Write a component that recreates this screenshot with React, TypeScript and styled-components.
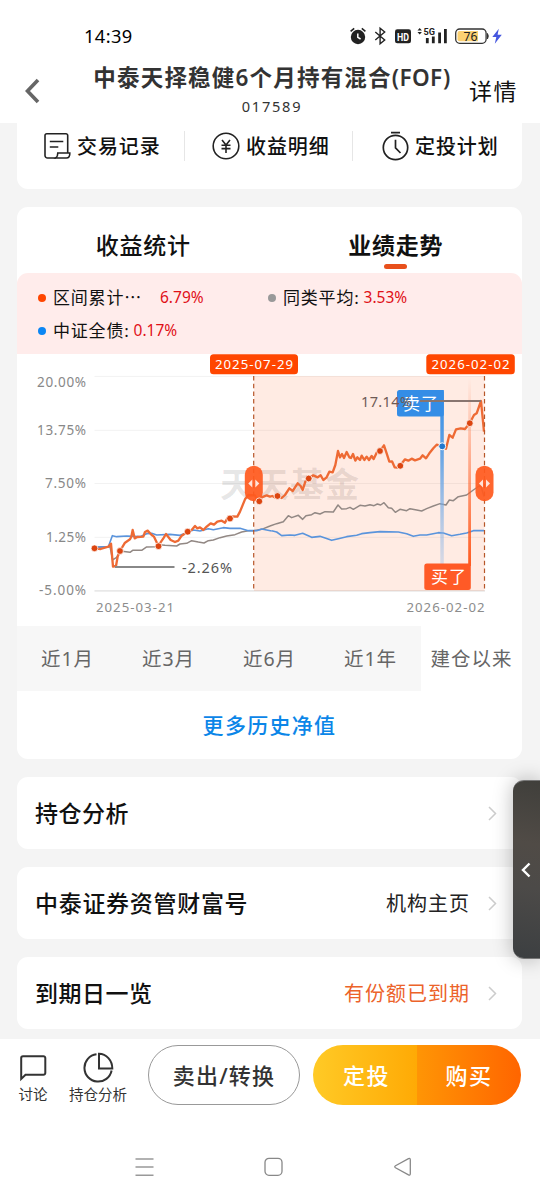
import React from "react";
import styled, { createGlobalStyle } from "styled-components";

const GlobalStyle = createGlobalStyle`
  * { box-sizing: border-box; }
  body {
    margin: 0;
    background: #f4f4f4;
    font-family: "Noto Sans", "Noto Sans CJK SC", sans-serif;
    color: #111;
  }
`;

const Screen = styled.div`
  position: relative;
  width: 540px;
  height: 1200px;
  display: flex;
  flex-direction: column;
  overflow: hidden;
  background: #f4f4f4;
`;

const Label = styled.span<{ $size: number; $gap?: number; $weight?: number; $color?: string }>`
  font-size: ${(p) => p.$size}px;
  letter-spacing: ${(p) => p.$gap ?? 0}px;
  font-weight: ${(p) => p.$weight ?? 400};
  color: ${(p) => p.$color ?? "#111"};
  line-height: 1;
  white-space: nowrap;
`;

const StatusBar = styled.div`
  height: 60px;
  padding: 12px 36px 0 84px;
  display: flex;
  align-items: center;
  justify-content: space-between;
  background: #fff;
`;

const Header = styled.header`
  height: 63px;
  padding: 0 21px 0 24px;
  display: flex;
  background: #fff;
`;

const BackButton = styled.button`
  width: 18px;
  height: 28px;
  margin-top: 17px;
  padding: 0;
  border: 0;
  background: none;
`;

const TitleBlock = styled.div`
  width: 360px;
  margin: 6px 0 0 50px;
  display: flex;
  flex-direction: column;
  align-items: center;
  gap: 9px;
`;

const TitleLine = styled.div`
  display: flex;
  align-items: center;
  height: 24px;
`;

const DetailLink = styled.div`
  margin: 20px 0 0 17px;
`;

const Content = styled.main`
  flex: 1;
  padding: 0 18px 0 17px;
  display: flex;
  flex-direction: column;
  gap: 18px;
`;

const Card = styled.section`
  background: #fff;
  border-radius: 11px;
  overflow: hidden;
`;

const ActionCard = styled(Card)`
  height: 66px;
  padding-top: 8px;
  border-radius: 0 0 11px 11px;
  display: grid;
  grid-template-columns: 167px 168px 170px;
`;

const Action = styled.div<{ $inset: number }>`
  height: 30px;
  display: flex;
  align-items: center;
  gap: 6px;
  padding-left: ${(p) => p.$inset}px;
  & + & { border-left: 1px solid #e6e6e6; }
  > span { padding-top: 2px; }
`;

const Tabs = styled.div`
  height: 66px;
  display: grid;
  grid-template-columns: 1fr 1fr;
`;

const Tab = styled.div`
  display: flex;
  flex-direction: column;
  align-items: center;
  padding-top: 27px;
  gap: 7px;
`;

const TabMarker = styled.i`
  width: 23px;
  height: 5px;
  border-radius: 3px;
  background: #e8501c;
`;

const Legend = styled.div`
  height: 81px;
  padding: 8px 20px 0 21px;
  display: grid;
  grid-template-columns: 230px 1fr;
  grid-template-rows: 33px 33px;
  background: #ffeceb;
  border-radius: 11px 11px 0 0;
`;

const LegendItem = styled.div`
  display: flex;
  align-items: center;
`;

const Dot = styled.i<{ $color: string }>`
  width: 8px;
  height: 8px;
  margin-right: 7px;
  border-radius: 50%;
  background: ${(p) => p.$color};
`;

const LegendValue = styled(Label)<{ $offset: number }>`
  margin-left: ${(p) => p.$offset}px;
`;

const ChartSvg = styled.svg`
  display: block;
  width: 505px;
  height: 272px;
`;

const Periods = styled.div`
  height: 65px;
  display: grid;
  grid-template-columns: repeat(5, 101px);
`;

const Period = styled.div<{ $active?: boolean }>`
  display: flex;
  align-items: center;
  justify-content: center;
  background: ${(p) => (p.$active ? "#fff" : "#f7f7f7")};
`;

const MoreLink = styled.div`
  height: 68px;
  display: flex;
  align-items: center;
  justify-content: center;
`;

const RowCard = styled(Card)`
  height: 72px;
  padding: 0 25px 0 18px;
  display: flex;
  align-items: center;
`;

const RowValue = styled.div`
  margin-left: auto;
  display: flex;
  align-items: center;
  gap: 18px;
  > span { padding-top: 2px; }
`;

const BottomBar = styled.footer`
  height: 161px;
  padding-top: 6px;
  background: #fff;
`;

const BottomActions = styled.div`
  height: 60px;
  padding-left: 18px;
  display: flex;
`;

const ToolButton = styled.div<{ $width: number; $left: number }>`
  width: ${(p) => p.$width}px;
  margin-left: ${(p) => p.$left}px;
  padding-top: 7px;
  display: flex;
  flex-direction: column;
  align-items: center;
  gap: 4px;
`;

const SellButton = styled.div`
  width: 152px;
  height: 60px;
  margin-left: 20px;
  display: flex;
  align-items: center;
  justify-content: center;
  border: 1px solid #999;
  border-radius: 30px;
`;

const BuyGroup = styled.div`
  width: 208px;
  height: 60px;
  margin-left: 13px;
  display: grid;
  grid-template-columns: 1fr 1fr;
  border-radius: 30px;
  overflow: hidden;
`;

const BuyButton = styled.div<{ $from: string; $to: string; $shift: number }>`
  display: flex;
  align-items: center;
  justify-content: center;
  padding-left: ${(p) => p.$shift}px;
  background: linear-gradient(90deg, ${(p) => p.$from}, ${(p) => p.$to});
`;

const SystemNav = styled.nav`
  height: 20px;
  margin-top: 52px;
  padding: 0 128px 0 135px;
  display: flex;
  justify-content: space-between;
`;

const SideHandle = styled.aside`
  position: absolute;
  top: 780px;
  right: 0;
  width: 27px;
  height: 179px;
  padding-right: 2px;
  display: flex;
  align-items: center;
  justify-content: center;
  border: 1px solid #777;
  border-right: 0;
  border-left: 0;
  border-radius: 11px 0 0 11px;
  background: linear-gradient(190deg, #403f3b 0%, #504b46 35%, #4c4a48 60%, #3c3f41 100%);
  box-shadow: 0 0 20px rgba(0, 0, 0, 0.28);
`;

const StatusIcons = () => (
  <svg width="156" height="24" viewBox="348 24 156 24" fill="none">
    <g>
      <circle cx="358" cy="37" r="7.2" fill="#222" />
      <path d="M350.6 31.4l3.6-3M365.4 31.4l-3.6-3" stroke="#222" strokeWidth="1.6" />
      <path d="M357.8 33.4v4l2.8 1.6" stroke="#fff" strokeWidth="1.5" />
    </g>
    <path d="M375.3 32l9.4 8-4.6 3.8V28.2l4.6 3.8-9.4 8" stroke="#222" strokeWidth="1.4" />
    <rect x="395" y="29.3" width="16" height="14" rx="2.3" fill="#222" />
    <text x="397" y="40.5" fontFamily="Roboto" fontSize="11.5" fontWeight="700" fill="#fff" textLength="12" lengthAdjust="spacingAndGlyphs">HD</text>
    <path d="M417.5 30.6l2.2-2.6 2.2 2.6zM417.5 32l2.2 2.6 2.2-2.6z" fill="#222" />
    <text x="423.5" y="35" fontFamily="Roboto" fontSize="9.5" fontWeight="700" fill="#222" textLength="11.5" lengthAdjust="spacingAndGlyphs">5G</text>
    <path d="M427.3 38v5.3M433.3 36.5v6.8M439.6 32.5v10.8M445.4 29v14.3" stroke="#222" strokeWidth="2.8" />
    <rect x="455.7" y="29" width="30.4" height="14.3" rx="4" stroke="#333" strokeWidth="1.3" />
    <path d="M459.5 31h18.5v10.3h-18.5a2 2 0 0 1-2-2V33a2 2 0 0 1 2-2z" fill="#fcd173" />
    <path d="M487.5 33.5q1.6 2.7 0 5.4z" fill="#333" stroke="#333" />
    <text x="463.6" y="40.6" fontFamily="Noto Sans" fontSize="12" fill="#222" textLength="14" lengthAdjust="spacingAndGlyphs">76</text>
    <path d="M498.8 28.8l-6.5 8.3h4l-1.5 6.6 7-9h-4.2z" fill="#4657df" />
  </svg>
);

const RecordIcon = () => (
  <svg width="28" height="28" viewBox="0 0 28 28" fill="none" stroke="#222" strokeWidth="1.6">
    <path d="M13 26H4.5A2.5 2.5 0 0 1 2 23.500V3.500A1.700 1.700 0 0 1 3.700 1.800H23a1.700 1.700 0 0 1 1.700 1.700V21" />
    <path d="M6.800 9.500h13.500M6.800 15h8.500" />
    <path d="M12.800 26q2-1.500 2-5h12q.3 5-3.500 5z" />
  </svg>
);

const YuanIcon = () => (
  <svg width="28" height="28" viewBox="0 0 28 28" fill="none" stroke="#222" strokeWidth="1.6">
    <circle cx="14" cy="14" r="12.800" />
    <path d="M10 8l4 5 4-5M14 13v8M9.500 13.300h9M9.500 16.600h9" />
  </svg>
);

const ClockIcon = () => (
  <svg width="27" height="30" viewBox="0 0 27 30" fill="none" stroke="#222" strokeWidth="1.700">
    <circle cx="13.500" cy="16.500" r="12.200" />
    <path d="M9 1.700h9M13.500 8.800v8l5 5.200" />
  </svg>
);

const RowArrow = () => (
  <svg width="9" height="15" viewBox="0 0 9 15" fill="none" stroke="#ccc" strokeWidth="1.500">
    <path d="M1 1l6.500 6.500L1 14" />
  </svg>
);

const AXIS = [
  { y: 376.4, textY: 387, value: "20.00%", x: 37 },
  { y: 430.3, textY: 434.5, value: "13.75%", x: 37 },
  { y: 483.5, textY: 488, value: "7.50%", x: 45 },
  { y: 537.3, textY: 541.5, value: "1.25%", x: 46 },
];

const fundEarly =
  "43,535 62,537 85,530 93,521 99,590 108,588 113,560 120,543 135,518 150,508 154,500 158,480 164,505 172,501 190,500 195,486 203,482 215,495 222,500 235,527 250,505 258,492 272,510 285,516 295,512 305,497 323,485 335,480 345,468 352,475 360,472 370,480 380,470 392,460 402,464 412,455 425,452 435,458 442,445 450,445 458,439 472,440 480,425 495,388 505,375 525,376 530,388 538,392 545,382 560,376 570,380 577,378 585,382 593,378";
const fundLate =
  "22,378 35,384 45,375 58,355 68,363 83,340 92,348 98,360 106,335 116,325 130,316 143,322 152,316 160,330 170,322 178,305 188,307 196,285 204,243 210,262 216,252 222,264 230,246 238,262 243,264 249,252 256,272 262,262 270,270 275,257 283,270 290,260 297,270 305,258 311,267 320,248 330,243 342,226 350,250 358,275 366,274 374,292 382,293 390,287 405,268 415,272 425,266 435,271 450,266 458,256 468,265 478,250 490,235 500,224 517,229 528,236 538,195 548,203 558,178 572,175 585,177 599,160 612,135 620,130 633,93 642,185";
const peerEarly =
  "43,532 90,530 98,570 110,562 120,543 150,547 158,541 185,541 200,531 225,530 235,524 255,526 290,528 300,522 320,520 335,512 355,516 372,519 385,512 400,510 420,503 440,498 465,494 485,486 505,482 522,482 545,478 570,468";
const peerLate =
  "0,468 20,461 40,455 55,437 65,443 85,436 98,448 108,437 125,434 135,428 150,432 165,425 190,426 204,405 215,417 230,416 240,412 250,418 270,406 285,408 300,404 312,407 322,402 332,405 342,398 355,413 365,415 376,427 390,418 410,422 420,416 440,420 455,423 470,416 490,408 510,401 528,405 538,390 550,392 565,380 590,375 610,360 632,345 642,380";
const bondEarly =
  "43,532 85,530 97,497 110,500 140,498 180,500 200,491 215,490 230,495 270,493 300,496 320,488 340,480 360,483 385,476 400,479 430,473 450,475 480,475 505,482 530,482 545,477 575,483";
const bondLate =
  "5,482 20,486 35,497 60,495 75,496 98,490 125,502 150,499 185,511 205,506 230,500 260,496 275,491 300,488 330,485 385,486 410,491 430,499 450,495 470,495 505,488 520,489 545,497 570,493 590,489 610,482 642,482";

const TRADES = [
  [94.5, 548.3], [120, 551], [158.5, 546.2], [187.7, 531.7], [230, 518.5],
  [259.3, 501.3], [277.5, 496], [308.7, 478.5], [380, 451], [400.3, 465.8], [469.8, 423.2],
];

const Handle = ({ x }: { x: number }) => (
  <g>
    <rect x={x - 9} y="465.700" width="18" height="35.500" rx="9" fill="#ff5a1f" fillOpacity=".93" />
    <path d={`M${x - 1.5} 479.500v8l-4-4zM${x + 1.5} 479.500v8l4-4z`} fill="#ffe3d8" />
  </g>
);

const PerformanceChart = () => (
  <ChartSvg viewBox="17 354 505 272" fontFamily='"Noto Sans", "Noto Sans CJK SC", sans-serif'>
    <defs>
      <linearGradient id="sellLine" x1="0" y1="0" x2="0" y2="1">
        <stop offset="0" stopColor="#348de6" />
        <stop offset=".3" stopColor="#5a9fe5" />
        <stop offset="1" stopColor="#8fb6e6" stopOpacity=".3" />
      </linearGradient>
      <linearGradient id="buyLine" x1="0" y1="0" x2="0" y2="1">
        <stop offset="0" stopColor="#ff5a1f" stopOpacity="0" />
        <stop offset="1" stopColor="#ff5a1f" />
      </linearGradient>
    </defs>
    {AXIS.map((a) => (
      <g key={a.value}>
        <line x1="94.500" x2="485" y1={a.y} y2={a.y} stroke="#f2f2f2" />
        <text x={a.x} y={a.textY} fontSize="13.500" fill="#888" textLength={86 - a.x}>{a.value}</text>
      </g>
    ))}
    <line x1="94.500" x2="485" y1="590.800" y2="590.800" stroke="#e8e8e8" strokeWidth="1.700" />
    <text x="39" y="595" fontSize="13.500" fill="#888" textLength="47">-5.00%</text>
    <text x="220" y="497" fontSize="34" fontWeight="700" fill="#000" fillOpacity=".1" textLength="139">天天基金</text>
    <rect x="254" y="376" width="230.500" height="215" fill="#ff4600" fillOpacity=".11" />

    <g fill="none" strokeLinejoin="round">
      <g stroke="#928884" strokeWidth="4.500">
        <polyline transform="translate(80 370) scale(.33333)" points={peerEarly} />
        <polyline transform="translate(270 370) scale(.33333)" points={peerLate} />
      </g>
      <g stroke="#5a94dc" strokeWidth="4.800">
        <polyline transform="translate(80 370) scale(.33333)" points={bondEarly} />
        <polyline transform="translate(270 370) scale(.33333)" points={bondLate} />
      </g>
    </g>

    <rect x="440.300" y="390" width="3.500" height="180" fill="url(#sellLine)" />
    <rect x="397" y="390" width="46.800" height="26.500" rx="2.500" fill="#348de6" />
    <text x="403" y="409.500" fontSize="17" fill="#fff" textLength="35">卖了</text>
    <rect x="468.200" y="378" width="2.800" height="188" fill="url(#buyLine)" />
    <rect x="424.300" y="563.500" width="46.500" height="26.500" rx="2.500" fill="#ff5a26" />
    <text x="431" y="583" fontSize="17" fill="#fff" textLength="35">买了</text>

    <g fill="none" stroke="#ee6a34" strokeWidth="7" strokeLinejoin="round">
      <polyline transform="translate(80 370) scale(.33333)" points={fundEarly} />
      <polyline transform="translate(270 370) scale(.33333)" points={fundLate} />
    </g>
    <g stroke="#b75628" strokeWidth="1.200" strokeDasharray="4.500 3.200">
      <line x1="253.700" x2="253.700" y1="376" y2="591" />
      <line x1="484.500" x2="484.500" y1="376" y2="591" />
    </g>

    <Handle x={253.8} />
    <Handle x={484.5} />
    {TRADES.map(([x, y]) => (
      <circle key={x} cx={x} cy={y} r="3.400" fill="#dc4510" stroke="#fff" strokeOpacity=".75" strokeWidth="1" />
    ))}
    <circle cx="442.200" cy="446.300" r="3.500" fill="#2478ce" stroke="#fff" />

    <line x1="115" x2="174.500" y1="567" y2="567" stroke="#888" strokeWidth="1.800" />
    <text x="182" y="573" fontSize="14.500" fill="#555" textLength="50">-2.26%</text>
    <line x1="420" x2="481" y1="401" y2="401" stroke="#887570" strokeWidth="1.800" />
    <text x="361" y="406.500" fontSize="14.500" fill="#6e5a55" textLength="51">17.14%</text>

    <g fontSize="13.200" fill="#fff">
      <rect x="210" y="354.200" width="88" height="20" rx="3.500" fill="#ff4600" />
      <text x="215" y="369.400" textLength="78">2025-07-29</text>
      <rect x="426.300" y="354.200" width="88.500" height="20" rx="3.500" fill="#ff4600" />
      <text x="431.500" y="369.400" textLength="78">2026-02-02</text>
    </g>
    <g fontSize="13.200" fill="#8c8c8c">
      <text x="96" y="612" textLength="78">2025-03-21</text>
      <text x="406.500" y="612" textLength="78">2026-02-02</text>
    </g>
  </ChartSvg>
);

const PERIODS = ["近1月", "近3月", "近6月", "近1年", "建仓以来"];

export default function App() {
  return (
    <Screen>
      <GlobalStyle />
      <StatusBar>
        <Label $size={18.3} $gap={0.4} $color="#000">14:39</Label>
        <StatusIcons />
      </StatusBar>
      <Header>
        <BackButton aria-label="返回">
          <svg width="18" height="28" viewBox="0 0 18 28" fill="none" stroke="#666" strokeWidth="3.600">
            <path d="M14 3L3.500 14 14 25" />
          </svg>
        </BackButton>
        <TitleBlock>
          <TitleLine>
            <Label $size={22.5} $gap={1.2} $weight={600} $color="#333">中泰天择稳健</Label>
            <Label $size={22.5} $gap={1.2} $weight={600} $color="#333">6</Label>
            <Label $size={22.5} $gap={1.2} $weight={600} $color="#333">个月持有混合</Label>
            <Label $size={22.5} $gap={0.4} $weight={600} $color="#333">(FOF)</Label>
          </TitleLine>
          <Label $size={14.6} $gap={1.75} $color="#333">017589</Label>
        </TitleBlock>
        <DetailLink><Label $size={23} $gap={1.5} $color="#111">详情</Label></DetailLink>
      </Header>

      <Content>
        <ActionCard>
          <Action $inset={26}><RecordIcon /><Label $size={20} $gap={0.9} $weight={500}>交易记录</Label></Action>
          <Action $inset={27}><YuanIcon /><Label $size={20} $gap={0.9} $weight={500}>收益明细</Label></Action>
          <Action $inset={29}><ClockIcon /><Label $size={20} $gap={0.9} $weight={500}>定投计划</Label></Action>
        </ActionCard>

        <Card>
          <Tabs>
            <Tab><Label $size={23} $gap={0.7} $weight={500}>收益统计</Label></Tab>
            <Tab><Label $size={23} $gap={0.7} $weight={700}>业绩走势</Label><TabMarker /></Tab>
          </Tabs>
          <Legend>
            <LegendItem>
              <Dot $color="#ff4600" />
              <Label $size={17} $gap={0.8}>区间累计⋯</Label>
              <LegendValue $size={15.5} $color="#df1118" $offset={18}>6.79%</LegendValue>
            </LegendItem>
            <LegendItem>
              <Dot $color="#999" />
              <Label $size={17} $gap={0.8}>同类平均:</Label>
              <LegendValue $size={15.5} $color="#df1118" $offset={4}>3.53%</LegendValue>
            </LegendItem>
            <LegendItem>
              <Dot $color="#0b86f4" />
              <Label $size={17} $gap={0.8}>中证全债:</Label>
              <LegendValue $size={15.5} $color="#df1118" $offset={4}>0.17%</LegendValue>
            </LegendItem>
          </Legend>
          <PerformanceChart />
          <Periods>
            {PERIODS.map((name, i) => (
              <Period key={name} $active={i === 4}>
                <Label $size={19.5} $gap={1} $color="#666">{name}</Label>
              </Period>
            ))}
          </Periods>
          <MoreLink><Label $size={21} $gap={1.3} $weight={500} $color="#0b86e8">更多历史净值</Label></MoreLink>
        </Card>

        <RowCard>
          <Label $size={23} $gap={0.5} $weight={500}>持仓分析</Label>
          <RowValue><RowArrow /></RowValue>
        </RowCard>
        <RowCard>
          <Label $size={23} $gap={0.7} $weight={500}>中泰证券资管财富号</Label>
          <RowValue><Label $size={20} $gap={1} $color="#222">机构主页</Label><RowArrow /></RowValue>
        </RowCard>
        <RowCard>
          <Label $size={23} $gap={0.5} $weight={500}>到期日一览</Label>
          <RowValue><Label $size={20} $gap={1} $color="#ec632a">有份额已到期</Label><RowArrow /></RowValue>
        </RowCard>
      </Content>

      <BottomBar>
        <BottomActions>
          <ToolButton $width={30} $left={0}>
            <svg width="28" height="31" viewBox="0 0 28 31" fill="none" stroke="#333" strokeWidth="2">
              <path d="M2.200 27V6a1.800 1.800 0 0 1 1.800-1.800h20.500A1.800 1.800 0 0 1 26.300 6v15a1.800 1.800 0 0 1-1.800 1.800H6.500z" />
            </svg>
            <Label $size={14.5} $color="#333">讨论</Label>
          </ToolButton>
          <ToolButton $width={60} $left={20}>
            <svg width="32" height="31" viewBox="0 0 32 31" fill="none" stroke="#333" strokeWidth="2">
              <path d="M14.500 2.300A13.700 13.700 0 1 0 29.600 18.500" />
              <path d="M17 1.800V16.500H30.300A13.500 14.700 0 0 0 17 1.800z" />
            </svg>
            <Label $size={14.5} $color="#333">持仓分析</Label>
          </ToolButton>
          <SellButton><Label $size={22} $gap={1.2} $weight={500} $color="#333">卖出/转换</Label></SellButton>
          <BuyGroup>
            <BuyButton $from="#ffca26" $to="#ffaa05" $shift={3}><Label $size={22} $gap={1.5} $weight={500} $color="#fff">定投</Label></BuyButton>
            <BuyButton $from="#ff9505" $to="#ff6500" $shift={0}><Label $size={22} $gap={1.5} $weight={500} $color="#fff">购买</Label></BuyButton>
          </BuyGroup>
        </BottomActions>
        <SystemNav>
          <svg width="20" height="20" viewBox="0 0 20 20" stroke="#999" strokeWidth="1.500"><path d="M.5 2h18M.5 10h18M.5 18.200h18" /></svg>
          <svg width="20" height="20" viewBox="0 0 20 20" fill="none" stroke="#888" strokeWidth="1.300"><rect x="1" y="1.300" width="17" height="17" rx="4" /></svg>
          <svg width="20" height="20" viewBox="0 0 20 20" fill="none" stroke="#888" strokeWidth="1.300"><path d="M3.500 8.800L16.500 1.600q1.800-.8 1.800 1.100v14.100q0 1.900-1.800 1.100L3.500 10.700q-1.500-1 0-1.900z" /></svg>
        </SystemNav>
      </BottomBar>

      <SideHandle>
        <svg width="10" height="16" viewBox="0 0 10 16" fill="none" stroke="#fff" strokeWidth="2.400"><path d="M8.500 1.500L2 8l6.500 6.500" /></svg>
      </SideHandle>
    </Screen>
  );
}
